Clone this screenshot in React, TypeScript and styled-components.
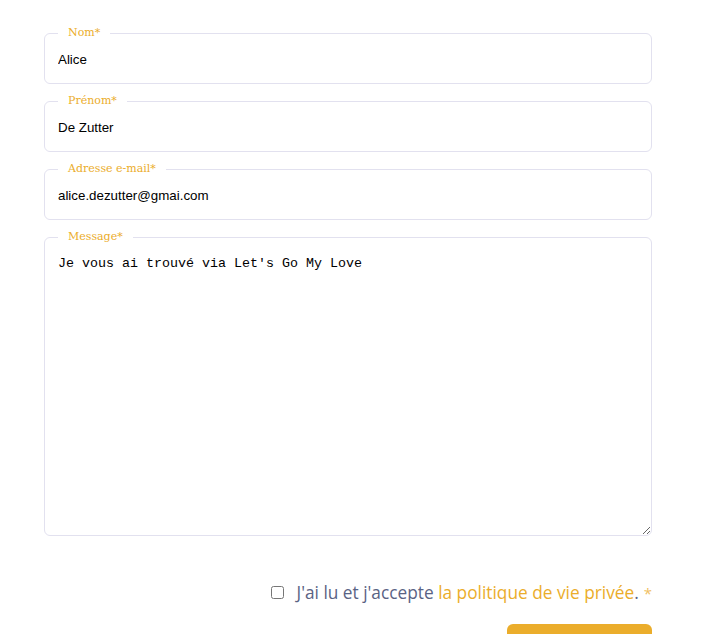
import * as React from 'react';
import styled, { createGlobalStyle } from 'styled-components';

const colors = {
    orange: '#ebad2b',
    border: '#e2e1ef',
    text: '#000000',
    muted: '#5a6384',
};

const GlobalStyle = createGlobalStyle`
    html, body {
        margin: 0;
        background: #ffffff;
        overflow: hidden;
    }
`;

const Page = styled.div`
    padding: 26px 0 0 44px;
    width: 608px;
`;

const Form = styled.form`
    display: flex;
    flex-direction: column;
    gap: 10px;
`;

const Field = styled.fieldset`
    margin: 0;
    padding: 0;
    border: 1px solid ${colors.border};
    border-radius: 6px;
    min-width: 0;
`;

const Legend = styled.legend`
    margin-left: 13px;
    padding: 0 10px;
    font-family: "DejaVu Serif", "Liberation Serif", serif;
    font-size: 11px;
    line-height: 14px;
    color: ${colors.orange};
`;

const Input = styled.input`
    display: block;
    box-sizing: border-box;
    width: 100%;
    height: 36px;
    margin: 0 0 7px;
    padding: 2px 13px 0;
    border: none;
    outline: none;
    background: transparent;
    font-family: "Liberation Sans", Arial, sans-serif;
    font-size: 13.33px;
    color: ${colors.text};
`;

const TextArea = styled.textarea`
    display: block;
    box-sizing: border-box;
    width: 100%;
    height: 291px;
    margin: 0;
    padding: 12px 13px;
    border: none;
    outline: none;
    background: transparent;
    font-family: "Liberation Mono", monospace;
    font-size: 13.33px;
    color: ${colors.text};
`;

const ConsentRow = styled.label`
    display: flex;
    justify-content: flex-end;
    align-items: center;
    gap: 13px;
    margin-top: 45px;
    font-family: "Open Sans", Lato, sans-serif;
    font-size: 17.3px;
    color: ${colors.muted};
`;

const Check = styled.input`
    margin: 0;
    width: 13px;
    height: 13px;
`;

const Link = styled.a`
    color: ${colors.orange};
    text-decoration: none;
`;

const Star = styled.span`
    color: #f0c062;
    font-size: 15px;
    margin-left: 5px;
`;

const Actions = styled.div`
    display: flex;
    justify-content: flex-end;
    margin-top: 20px;
`;

const Submit = styled.button`
    width: 145px;
    height: 44px;
    border: none;
    border-radius: 6px;
    background: ${colors.orange};
`;

function TextField(props: { label: string; value: string; type?: string }) {
    return (
        <Field>
            <Legend>{props.label}*</Legend>
            <Input type={props.type || 'text'} defaultValue={props.value} />
        </Field>
    );
}

export default function App() {
    return (
        <Page>
            <GlobalStyle />
            <Form onSubmit={e => e.preventDefault()}>
                <TextField label="Nom" value="Alice" />
                <TextField label="Prénom" value="De Zutter" />
                <TextField label="Adresse e-mail" type="email" value="alice.dezutter@gmai.com" />
                <Field>
                    <Legend>Message*</Legend>
                    <TextArea defaultValue="Je vous ai trouvé via Let's Go My Love" />
                </Field>
            </Form>
            <ConsentRow>
                <Check type="checkbox" />
                <span>
                    J'ai lu et j'accepte <Link href="#">la politique de vie privée</Link>.
                    <Star>*</Star>
                </span>
            </ConsentRow>
            <Actions>
                <Submit type="submit" />
            </Actions>
        </Page>
    );
}
